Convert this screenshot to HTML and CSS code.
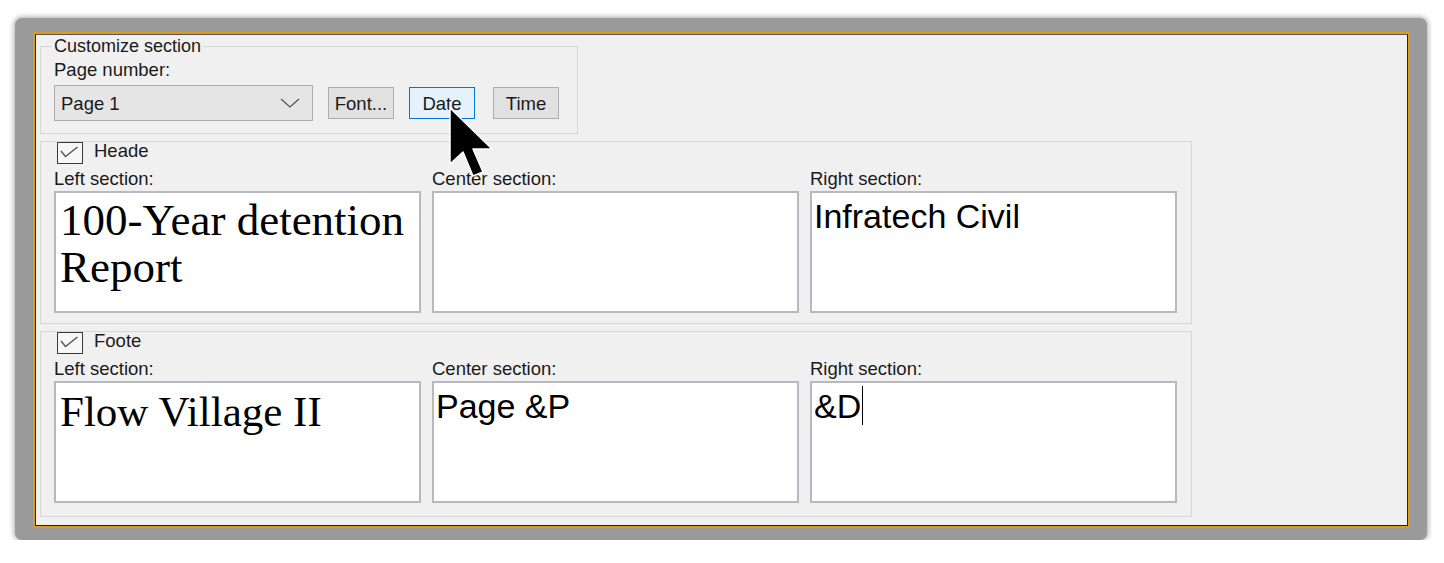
FILE: index.html
```html
<!DOCTYPE html>
<html>
<head>
<meta charset="utf-8">
<title>Page Setup - Header/Footer</title>
<link rel="stylesheet" href="styles.css">
</head>
<body>
<div class="frame">
  <div class="window">
    <div class="client">
      <fieldset class="custom">
        <legend>Customize section</legend>
        <div class="label">Page number:</div>
        <div class="controls">
          <div class="combo">
            <span>Page 1</span>
            <svg class="chevron" width="20" height="10" viewBox="0 0 20 10"><path d="M1 1 L10 9 L19 1" fill="none" stroke="#555" stroke-width="1.3"/></svg>
          </div>
          <div class="btn">Font...</div>
          <div class="btn btn-focus">Date</div>
          <div class="btn btn-time">Time</div>
        </div>
      </fieldset>

      <div class="group">
        <div class="check-row">
          <div class="checkbox">
            <svg width="24" height="20" viewBox="0 0 24 20"><path d="M3 8 L7.5 13.5 L19.5 4" fill="none" stroke="#555" stroke-width="1.4"/></svg>
          </div>
          <span class="check-label">Heade</span>
        </div>
        <div class="sections">
          <div class="section">
            <div class="label">Left section:</div>
            <div class="box serif serif-large">100-Year detention Report</div>
          </div>
          <div class="section">
            <div class="label">Center section:</div>
            <div class="box sans"></div>
          </div>
          <div class="section">
            <div class="label">Right section:</div>
            <div class="box sans">Infratech Civil</div>
          </div>
        </div>
      </div>

      <div class="group group-footer">
        <div class="check-row">
          <div class="checkbox">
            <svg width="24" height="20" viewBox="0 0 24 20"><path d="M3 8 L7.5 13.5 L19.5 4" fill="none" stroke="#555" stroke-width="1.4"/></svg>
          </div>
          <span class="check-label">Foote</span>
        </div>
        <div class="sections">
          <div class="section">
            <div class="label">Left section:</div>
            <div class="box serif">Flow Village II</div>
          </div>
          <div class="section">
            <div class="label">Center section:</div>
            <div class="box sans">Page &amp;P</div>
          </div>
          <div class="section">
            <div class="label">Right section:</div>
            <div class="box sans">&amp;D<span class="caret"></span></div>
          </div>
        </div>
      </div>
    </div>
  </div>
</div>

<svg class="cursor" width="50" height="76" viewBox="-2 -2 50 76">
  <path d="M0 0 V56 L13 44 L23 68 L33 64 L23 41 L42 41 Z" fill="#000" stroke="#fff" stroke-width="1.5" stroke-linejoin="round"/>
</svg>
</body>
</html>
```

FILE: styles.css
```css
* {
  box-sizing: border-box;
}

html,
body {
  margin: 0;
  padding: 0;
  background: #ffffff;
}

body {
  font-family: "Liberation Sans", Arial, sans-serif;
  font-size: 18.5px;
  color: #1a1a1a;
}

.frame {
  margin: 18px 0 0 15px;
  width: 1412px;
  height: 522px;
  padding: 14px 17px 12px 18px;
  background: #9a9a9a;
  border-radius: 7px;
  box-shadow: 0 0 4px 2px rgba(165, 165, 165, 0.7);
}

.window {
  height: 100%;
  border: 2px solid #dd9d1c;
}

.client {
  height: 100%;
  background: #f0f0f0;
  border: 1px solid #222222;
  border-top-color: #555555;
  padding: 0 0 0 4px;
}

.label {
  line-height: 21px;
  white-space: nowrap;
}

/* Customize section */
.custom {
  margin: 1px 0 0 0;
  width: 538px;
  min-width: 0;
  padding: 2px 13px 12px 13px;
  border: 1px solid #d6d6d6;
}

.custom legend {
  padding: 0 2px;
  margin-left: -2px;
  line-height: 21px;
  font-size: 18px;
}

.controls {
  margin-top: 5px;
  display: flex;
  align-items: center;
  gap: 15px;
}

.combo {
  width: 259px;
  height: 36px;
  border: 1px solid #adadad;
  background: #e5e5e5;
  display: flex;
  align-items: center;
  justify-content: space-between;
  padding: 0 12px 0 6px;
  line-height: 21px;
}

.chevron {
  display: block;
}

.btn {
  width: 66px;
  height: 32px;
  border: 1px solid #adadad;
  background: #e1e1e1;
  display: flex;
  align-items: center;
  justify-content: center;
  line-height: 21px;
}

.btn-focus {
  border-color: #0078d7;
  background: #e5f1fb;
}

.btn-time {
  margin-left: 3px;
}

/* Header / footer groups */
.group {
  margin-top: 7px;
  width: 1152px;
  border: 1px solid #d6d6d6;
  padding: 0 14px 10px 13px;
}

.group-footer {
  padding-bottom: 13px;
}

.check-row {
  height: 22px;
  display: flex;
  align-items: flex-start;
  gap: 11px;
}

.checkbox {
  margin-left: 3px;
  width: 26px;
  height: 22px;
  border: 1px solid #3a3a3a;
  background: #f7f7f7;
}

.checkbox svg {
  display: block;
}

.check-label {
  margin-top: -2px;
  line-height: 21px;
}

.sections {
  margin-top: 4px;
  display: grid;
  grid-template-columns: repeat(3, 367px);
  column-gap: 11px;
}

.section .label {
  margin-bottom: 2px;
}

.box {
  height: 122px;
  border: 2px solid #b8b8bf;
  background: #ffffff;
  color: #000000;
  overflow: hidden;
}

.serif {
  font-family: "Liberation Serif", "Times New Roman", serif;
  font-size: 43px;
  line-height: 47px;
  padding: 5px 2px 0 4px;
}

.serif-large {
  font-size: 45px;
  padding-top: 4px;
}

.sans {
  font-family: "Liberation Sans", Arial, sans-serif;
  font-size: 34px;
  line-height: 40px;
  padding: 3px 2px 0 2px;
}

.caret {
  display: inline-block;
  width: 1px;
  height: 39px;
  margin-left: 1px;
  background: #000000;
  vertical-align: top;
}

/* Mouse pointer overlay */
.cursor {
  position: absolute;
  left: 448px;
  top: 106px;
}
```
